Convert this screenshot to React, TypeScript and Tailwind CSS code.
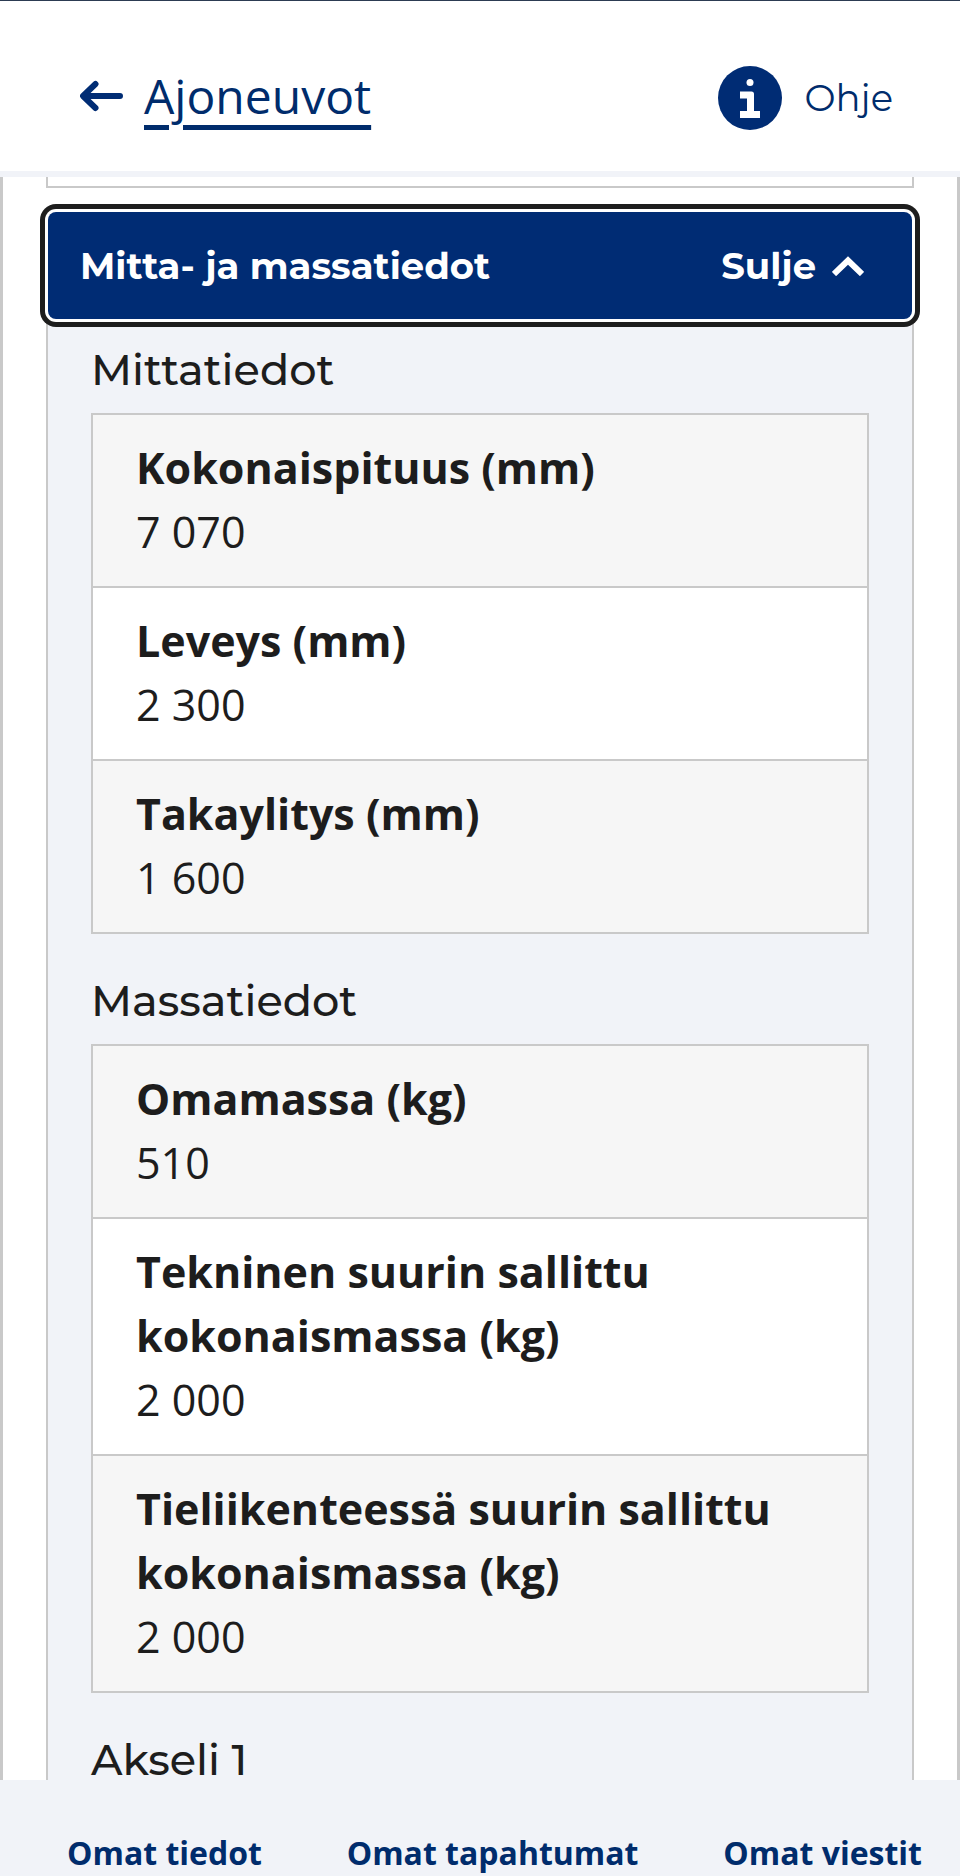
import { useState } from "react";

const massSections = [
  {
    title: "Mittatiedot",
    rows: [
      { label: "Kokonaispituus (mm)", value: "7 070" },
      { label: "Leveys (mm)", value: "2 300" },
      { label: "Takaylitys (mm)", value: "1 600" },
    ],
  },
  {
    title: "Massatiedot",
    rows: [
      { label: "Omamassa (kg)", value: "510" },
      { label: "Tekninen suurin sallittu kokonaismassa (kg)", value: "2 000" },
      { label: "Tieliikenteessä suurin sallittu kokonaismassa (kg)", value: "2 000" },
    ],
  },
];

const tabs = ["Omat tiedot", "Omat tapahtumat", "Omat viestit"];

function Header() {
  return (
    <header className="flex items-start justify-between border-t border-b-6 border-t-[#2c3b52] border-b-[#f1f3f8] bg-white pt-[65px] pr-[67px] pb-[41px] pl-20 text-[#002c6c]">
      <a href="#ajoneuvot" className="flex items-center gap-5">
        <svg
          className="h-8 w-11"
          viewBox="0 0 44 32"
          fill="none"
          stroke="#002c74"
          strokeWidth={6}
          strokeLinecap="round"
          strokeLinejoin="round"
          aria-hidden="true"
        >
          <path d="M40 16H4M15.500 4 3 16l12.500 12" />
        </svg>
        <span className="text-[48px] leading-[60px] underline decoration-[5px] underline-offset-[11px]">
          Ajoneuvot
        </span>
      </a>
      <a
        href="#ohje"
        className="flex items-center gap-[22px] font-['Montserrat','Inter',sans-serif] text-[37px] leading-[64px] font-normal"
      >
        <svg className="h-16 w-16" viewBox="0 0 64 64" aria-hidden="true">
          <circle cx="32" cy="32" r="32" fill="#002c74" />
          <circle cx="32" cy="16.500" r="3.500" fill="#fff" />
          <path
            d="M22 25.500h11.500q2.500 0 2.500 2.500v17h6v7H22v-7h7V32.500h-7z"
            fill="#fff"
          />
        </svg>
        Ohje
      </a>
    </header>
  );
}

function DataSection({ title, rows }: (typeof massSections)[number]) {
  return (
    <section className="mb-[47px]">
      <h3 className="mb-[23px] font-['Montserrat','Inter',sans-serif] text-[43px] leading-10 font-medium">
        {title}
      </h3>
      <dl className="border-2 border-t-0 border-[#c9c9c9] text-[43px] leading-[64px]">
        {rows.map((row) => (
          <div
            key={row.label}
            className="border-t-2 border-[#c9c9c9] bg-white px-[43px] pt-[21px] pb-[22px] odd:bg-[#f6f6f6]"
          >
            <dt className="font-bold">{row.label}</dt>
            <dd>{row.value}</dd>
          </div>
        ))}
      </dl>
    </section>
  );
}

export default function App() {
  const [open, setOpen] = useState(true);

  return (
    <div className="flex min-h-screen flex-col bg-[#f1f3f8] font-['Open_Sans','Noto_Sans',sans-serif] text-[#1d1d1d]">
      <Header />

      <main className="flex flex-1 flex-col border-x-[3px] border-[#c9c9c9] bg-white px-[43px]">
        <div className="mb-6 h-[11px] border-2 border-t-0 border-[#c9c9c9]" />

        <div className="flex flex-1 flex-col border-x-2 border-[#c9c9c9] bg-[#f1f3f8]">
          <button
            type="button"
            aria-expanded={open}
            aria-controls="mitta-ja-massatiedot"
            onClick={() => setOpen(!open)}
            className="flex h-[107px] items-center justify-between rounded-lg bg-[#002c74] pr-12 pl-8 font-['Montserrat','Inter',sans-serif] text-[37px] font-bold text-white shadow-[0_0_0_3px_#fff,0_0_0_8px_#1d1d1d]"
          >
            <span>Mitta- ja massatiedot</span>
            <span className="flex items-center gap-4">
              {open ? "Sulje" : "Avaa"}
              <svg
                className="h-5 w-8"
                viewBox="0 0 32 20"
                fill="none"
                stroke="currentColor"
                strokeWidth={6}
                aria-hidden="true"
              >
                <path d={open ? "M2 18 16 4.500 30 18" : "M2 2 16 15.500 30 2"} />
              </svg>
            </span>
          </button>

          {open && (
            <div id="mitta-ja-massatiedot" className="px-[43px] pt-[31px]">
              {massSections.map((section) => (
                <DataSection key={section.title} {...section} />
              ))}
              <h3 className="font-['Montserrat','Inter',sans-serif] text-[43px] leading-10 font-medium">
                Akseli 1
              </h3>
            </div>
          )}
        </div>
      </main>

      <nav className="flex justify-between pt-[50px] pr-[38px] pl-[67px] text-[32px] leading-[46px] font-bold text-[#002c6c]">
        {tabs.map((tab) => (
          <a key={tab} href={`#${tab.toLowerCase().replace(" ", "-")}`}>
            {tab}
          </a>
        ))}
      </nav>
    </div>
  );
}
